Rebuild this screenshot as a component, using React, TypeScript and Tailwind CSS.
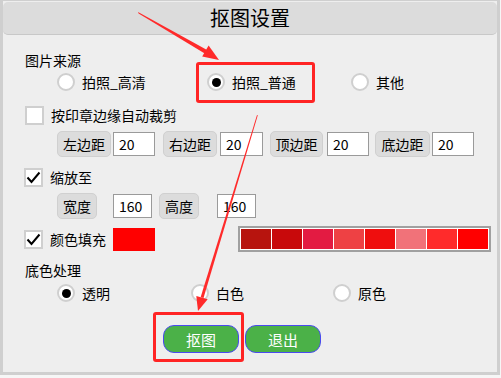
import React from 'react';

const font = { fontFamily: '"Noto Sans CJK SC", "Noto Sans", sans-serif' };

const swatches = ['#b7140e', '#c8090b', '#e31b42', '#ee4144', '#ef0e0e', '#f17279', '#ff2b2b', '#ff0000'];

const Radio = ({ checked, label, width }: { checked?: boolean; label: string; width: string }) => (
    <div className={`flex items-center ${width}`}>
        <span className="w-[18px] h-[18px] rounded-full bg-white border-2 border-[#cfcfcf] flex items-center justify-center">
            {checked && <span className="w-[9px] h-[9px] rounded-full bg-black" />}
        </span>
        <span className="ml-[7px] text-[14px] leading-none text-black">{label}</span>
    </div>
);

const Check = ({ checked, label }: { checked?: boolean; label: string }) => (
    <div className="flex items-center">
        <span className="w-[19px] h-[19px] bg-white border-2 border-[#cfcfcf] flex items-center justify-center">
            {checked && (
                <svg width="15" height="13" viewBox="0 0 15 13">
                    <path d="M1.5 6.5 L5.5 11 L13.5 1.5" fill="none" stroke="#000" strokeWidth="2" />
                </svg>
            )}
        </span>
        <span className="ml-[7px] text-[14px] leading-none text-black">{label}</span>
    </div>
);

const LabelBtn = ({ text, width }: { text: string; width: string }) => (
    <span className={`${width} h-[26px] rounded-[5px] bg-[#dcdcdc] border border-[#d0d0d0] flex items-center justify-center text-[14px] leading-none text-black`}>
        {text}
    </span>
);

const Field = ({ value, width }: { value: string; width: string }) => (
    <span className={`${width} h-[24px] bg-white border border-[#9a9a9a] flex items-center pl-[5px] text-[14px] leading-none text-black`}>
        {value}
    </span>
);

export default function App() {
    return (
        <div className="w-[501px] h-[378px] bg-[#f6f6f6] relative overflow-hidden" style={font}>
            <div className="w-[500px] h-[375px] bg-[#eeeeee] border-l-[3px] border-r-[3px] border-t border-b-[3px] border-[#cfcfcf] flex flex-col">
                <div className="mt-px h-[33px] rounded-[5px] bg-[#dcdcdc] border-b border-[#c8c8c8] flex items-center justify-center text-[20px] leading-none text-black">
                    抠图设置
                </div>

                <div className="mt-[15px] h-[20px] pl-[22px] flex items-center text-[14px] leading-none text-black">图片来源</div>

                <div className="h-[24px] pl-[54px] flex items-center">
                    <Radio label="拍照_高清" width="w-[150px]" />
                    <Radio checked label="拍照_普通" width="w-[144px]" />
                    <Radio label="其他" width="w-[100px]" />
                </div>

                <div className="mt-[10px] h-[22px] pl-[22px] flex items-center">
                    <Check label="按印章边缘自动裁剪" />
                </div>

                <div className="mt-[5px] h-[26px] pl-[54px] flex items-center">
                    <LabelBtn text="左边距" width="w-[54px]" />
                    <span className="ml-[2px]"><Field value="20" width="w-[42px]" /></span>
                    <span className="ml-[8px]"><LabelBtn text="右边距" width="w-[54px]" /></span>
                    <span className="ml-[3px]"><Field value="20" width="w-[43px]" /></span>
                    <span className="ml-[7px]"><LabelBtn text="顶边距" width="w-[53px]" /></span>
                    <span className="ml-[4px]"><Field value="20" width="w-[42px]" /></span>
                    <span className="ml-[6px]"><LabelBtn text="底边距" width="w-[55px]" /></span>
                    <span className="ml-[2px]"><Field value="20" width="w-[42px]" /></span>
                </div>

                <div className="mt-[9px] h-[22px] pl-[21px] flex items-center">
                    <Check checked label="缩放至" />
                </div>

                <div className="mt-[5px] h-[26px] pl-[54px] flex items-center">
                    <LabelBtn text="宽度" width="w-[40px]" />
                    <span className="ml-[16px]"><Field value="160" width="w-[39px]" /></span>
                    <span className="ml-[7px]"><LabelBtn text="高度" width="w-[40px]" /></span>
                    <span className="ml-[18px]"><Field value="160" width="w-[39px]" /></span>
                </div>

                <div className="mt-[7px] h-[26px] pl-[21px] flex items-center">
                    <div className="w-[89px]"><Check checked label="颜色填充" /></div>
                    <span className="w-[42px] h-[23px] bg-[#ff0000]" />
                    <div className="ml-[83px] h-[26px] border-2 border-[#a0a0a0] bg-white p-px flex gap-px">
                        {swatches.map((c) => (
                            <span key={c} className="w-[30px] h-full" style={{ backgroundColor: c }} />
                        ))}
                    </div>
                </div>

                <div className="mt-[8px] h-[20px] pl-[22px] flex items-center text-[14px] leading-none text-black">底色处理</div>

                <div className="mt-px h-[24px] pl-[54px] flex items-center">
                    <Radio checked label="透明" width="w-[134px]" />
                    <Radio label="白色" width="w-[142px]" />
                    <Radio label="原色" width="w-[100px]" />
                </div>

                <div className="mt-[20px] h-[28px] pl-[160px] flex items-center gap-[6px]">
                    <span className="w-[76px] h-[28px] rounded-[11px] bg-[#4bb148] border border-[#4a4af0] flex items-center justify-center text-[15px] leading-none text-white">抠图</span>
                    <span className="w-[76px] h-[28px] rounded-[11px] bg-[#4bb148] border border-[#4a4af0] flex items-center justify-center text-[15px] leading-none text-white">退出</span>
                </div>
            </div>

            {/* annotation overlay */}
            <div className="absolute left-[196px] top-[62px] w-[119px] h-[41px] border-[3px] border-[#ff2424] rounded-[3px] pointer-events-none" />
            <div className="absolute left-[153px] top-[312px] w-[91px] h-[50px] border-[3px] border-[#ff2424] rounded-[3px] pointer-events-none" />
            <svg className="absolute left-0 top-0 pointer-events-none" width="501" height="378" viewBox="0 0 501 378">
                <polygon points="138,12 138.6,13.6 206,54.2 208,50.6" fill="#ff2a2a" />
                <polygon points="219,60 202.2,56.6 208.6,45.6" fill="#ff2a2a" />
                <polygon points="257,115 257.8,115.3 203.5,298 200.6,297.2" fill="#ff2a2a" />
                <polygon points="198,311 196.3,295.9 207.7,299.3" fill="#ff2a2a" />
            </svg>
        </div>
    );
}
